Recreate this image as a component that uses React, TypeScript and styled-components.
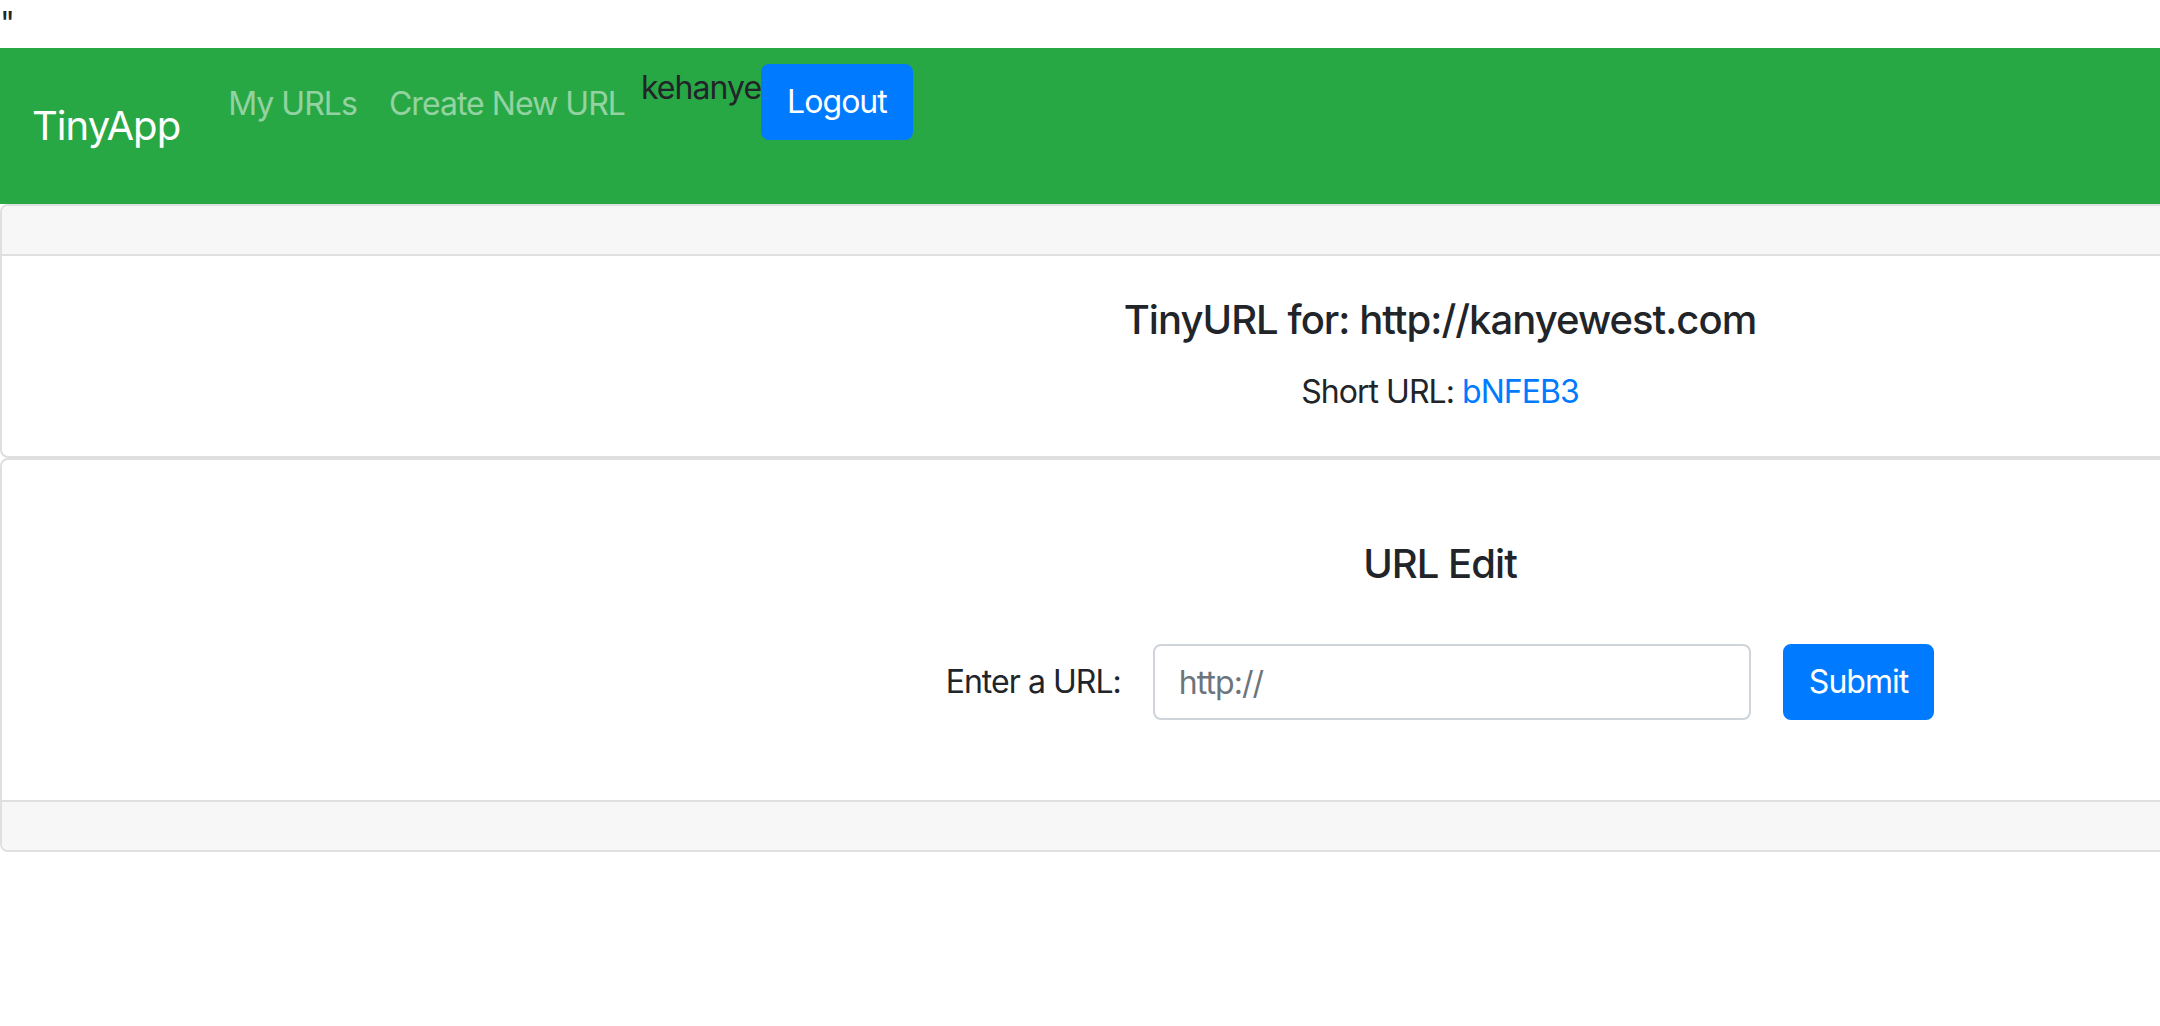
import styled, { createGlobalStyle } from "styled-components";

const GlobalStyle = createGlobalStyle`
  html, body {
    margin: 0;
    padding: 0;
    overflow: hidden;
    background: #fff;
  }
  body {
    font-family: Inter, "Liberation Sans", Arial, sans-serif;
    font-size: 32px;
    line-height: 48px;
    letter-spacing: -0.03em;
    color: #212529;
  }
  * {
    box-sizing: border-box;
  }
`;

const Stray = styled.div`
  height: 48px;
`;

const Navbar = styled.nav`
  display: flex;
  align-items: center;
  height: 156px;
  padding: 16px 32px;
  background-color: #28a745;
`;

const Brand = styled.a`
  font-size: 40px;
  line-height: 60px;
  padding: 10px 0;
  margin-right: 32px;
  color: #fff;
  text-decoration: none;
`;

const NavList = styled.ul`
  display: flex;
  align-items: flex-start;
  align-self: flex-start;
  list-style: none;
  margin: 0;
  padding: 0;
`;

const NavLink = styled.a`
  display: block;
  padding: 16px;
  color: rgba(255, 255, 255, 0.5);
  text-decoration: none;
`;

const UserName = styled.span`
  color: #212529;
`;

const Button = styled.button`
  height: 76px;
  padding: 12px 24px;
  font-family: inherit;
  font-size: 32px;
  line-height: 48px;
  letter-spacing: inherit;
  color: #fff;
  background-color: #007bff;
  border: 2px solid #007bff;
  border-radius: 8px;
  cursor: pointer;
`;

const Card = styled.section`
  width: 2880px;
  border: 2px solid #dfdfdf;
  border-radius: 8px;
  background: #fff;
  overflow: hidden;
`;

const CardBand = styled.div<{ $edge: "top" | "bottom" }>`
  height: 50px;
  background-color: #f7f7f7;
  ${(p) =>
    p.$edge === "top"
      ? "border-bottom: 2px solid #dfdfdf;"
      : "border-top: 2px solid #dfdfdf;"}
`;

const CardBody = styled.div`
  padding: 40px;
  text-align: center;
`;

const Title = styled.h5<{ $spaceTop?: number; $spaceBottom: number }>`
  margin: ${(p) => p.$spaceTop ?? 0}px 0 ${(p) => p.$spaceBottom}px;
  font-size: 40px;
  line-height: 48px;
  font-weight: 500;
`;

const Text = styled.p`
  margin: 0;
`;

const Link = styled.a`
  color: #007bff;
  text-decoration: none;
`;

const EditForm = styled.form`
  display: flex;
  align-items: center;
  justify-content: center;
  gap: 32px;
  margin-bottom: 40px;
`;

const Label = styled.label`
  line-height: 48px;
`;

const Input = styled.input`
  width: 598px;
  height: 76px;
  padding: 12px 24px;
  font-family: inherit;
  font-size: 32px;
  line-height: 48px;
  letter-spacing: inherit;
  color: #495057;
  border: 2px solid #ced4da;
  border-radius: 8px;
  outline: none;

  &::placeholder {
    color: #6c757d;
  }
`;

export default function App() {
  return (
    <>
      <GlobalStyle />
      <Stray>"</Stray>
      <Navbar>
        <Brand href="#">TinyApp</Brand>
        <NavList>
          <li>
            <NavLink href="#">My URLs</NavLink>
          </li>
          <li>
            <NavLink href="#">Create New URL</NavLink>
          </li>
          <li>
            <UserName>kehanye</UserName>
          </li>
          <li>
            <Button type="button">Logout</Button>
          </li>
        </NavList>
      </Navbar>

      <Card>
        <CardBand $edge="top" />
        <CardBody>
          <Title $spaceBottom={24}>TinyURL for: http://kanyewest.com</Title>
          <Text>
            Short URL: <Link href="#">bNFEB3</Link>
          </Text>
        </CardBody>
      </Card>

      <Card>
        <CardBody>
          <Title $spaceTop={40} $spaceBottom={56}>
            URL Edit
          </Title>
          <EditForm onSubmit={(e) => e.preventDefault()}>
            <Label htmlFor="longURL">Enter a URL:</Label>
            <Input id="longURL" type="text" placeholder="http://" />
            <Button type="submit">Submit</Button>
          </EditForm>
        </CardBody>
        <CardBand $edge="bottom" />
      </Card>
    </>
  );
}
